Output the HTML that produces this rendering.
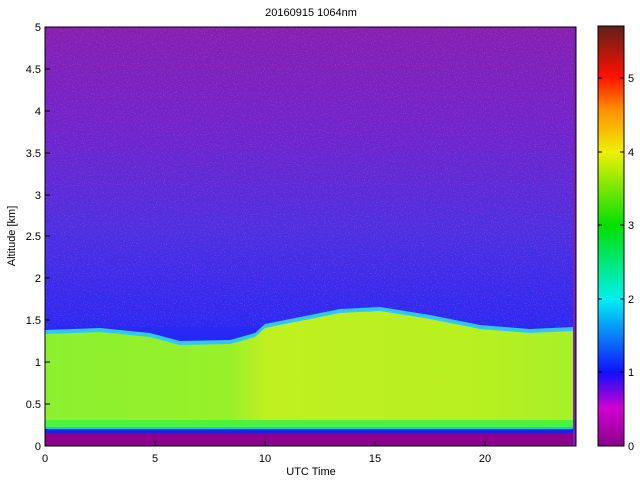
<!DOCTYPE html>
<html><head><style>
html,body{margin:0;padding:0;background:#fff;}
svg{display:block;font-family:"Liberation Sans",sans-serif;font-size:11px;}
</style></head><body>
<svg width="640" height="480" xmlns="http://www.w3.org/2000/svg">
<defs>
<linearGradient id="sky" gradientUnits="userSpaceOnUse" x1="0" y1="27" x2="0" y2="340">
<stop offset="0" stop-color="#8420b0"/>
<stop offset="0.3" stop-color="#7024c8"/>
<stop offset="0.65" stop-color="#4a30e0"/>
<stop offset="1" stop-color="#2428f4"/>
</linearGradient>
<linearGradient id="cb" x1="0" y1="1" x2="0" y2="0">
<stop offset="0" stop-color="#8a008a"/>
<stop offset="0.09" stop-color="#d000d0"/>
<stop offset="0.175" stop-color="#1010ff"/>
<stop offset="0.35" stop-color="#00f0f0"/>
<stop offset="0.525" stop-color="#00e000"/>
<stop offset="0.7" stop-color="#f0f000"/>
<stop offset="0.8" stop-color="#ff9000"/>
<stop offset="0.88" stop-color="#ff1000"/>
<stop offset="1" stop-color="#602018"/>
</linearGradient>
<linearGradient id="bl" x1="0" y1="0" x2="1" y2="0">
<stop offset="0" stop-color="#8cf030"/>
<stop offset="0.35" stop-color="#98f028"/>
<stop offset="0.42" stop-color="#c0f020"/>
<stop offset="0.8" stop-color="#b8f020"/>
<stop offset="1" stop-color="#a8f028"/>
</linearGradient>
<filter id="n" x="0" y="0" width="100%" height="100%">
<feTurbulence type="fractalNoise" baseFrequency="0.9" numOctaves="1" seed="3"/>
<feColorMatrix values="0 0 0 0 0.9  0 0 0 0 0.1  0 0 0 0 0.9  0 0 0 3 -1.6"/>
</filter>
</defs>
<rect x="45" y="27" width="531" height="419" fill="url(#sky)"/>
<rect x="45" y="27" width="531" height="300" filter="url(#n)" opacity="0.5"/>
<polygon fill="#30c8f0" points="45,330 100,328 150,333 180,341 230,340 255,333 265,324 290,319 340,309 380,307 430,315 480,325 530,329 573,327 573,446 45,446"/>
<polygon fill="url(#bl)" points="45,334 100,332 150,337 180,345 230,344 255,337 265,328 290,323 340,313 380,311 430,319 480,329 530,333 573,331 573,446 45,446"/>
<rect x="45" y="420" width="528" height="7" fill="#50f040"/>
<rect x="45" y="427" width="528" height="2" fill="#00d0f0"/>
<rect x="45" y="429" width="528" height="4" fill="#2020e0"/>
<rect x="45" y="433" width="528" height="13" fill="#8c0090"/>
<rect x="573" y="27" width="3" height="419" fill="#8020b0"/>
<rect x="45" y="27" width="531" height="419" fill="none" stroke="#000" stroke-width="1"/>
<g stroke="#000">
<line x1="45" y1="446" x2="50" y2="446"/><line x1="45" y1="404" x2="50" y2="404"/><line x1="45" y1="362" x2="50" y2="362"/><line x1="45" y1="320" x2="50" y2="320"/><line x1="45" y1="278" x2="50" y2="278"/><line x1="45" y1="236" x2="50" y2="236"/><line x1="45" y1="195" x2="50" y2="195"/><line x1="45" y1="153" x2="50" y2="153"/><line x1="45" y1="111" x2="50" y2="111"/><line x1="45" y1="69" x2="50" y2="69"/>
<line x1="155" y1="446" x2="155" y2="441"/><line x1="265" y1="446" x2="265" y2="441"/><line x1="375" y1="446" x2="375" y2="441"/><line x1="485" y1="446" x2="485" y2="441"/>
</g>
<g text-anchor="end">
<text x="41" y="450">0</text><text x="41" y="408">0.5</text><text x="41" y="366">1</text><text x="41" y="324">1.5</text><text x="41" y="282">2</text><text x="41" y="240">2.5</text><text x="41" y="199">3</text><text x="41" y="157">3.5</text><text x="41" y="115">4</text><text x="41" y="73">4.5</text><text x="41" y="31">5</text>
</g>
<g text-anchor="middle">
<text x="45" y="462">0</text><text x="155" y="462">5</text><text x="265" y="462">10</text><text x="375" y="462">15</text><text x="485" y="462">20</text>
<text x="311" y="475">UTC Time</text>
<text x="311" y="16">20160915 1064nm</text>
<text transform="translate(15,236) rotate(-90)">Altitude [km]</text>
</g>
<rect x="598" y="26" width="26" height="420" fill="url(#cb)" stroke="#000"/>
<g stroke="#000">
<line x1="598" y1="446" x2="602" y2="446"/><line x1="598" y1="372" x2="602" y2="372"/><line x1="598" y1="299" x2="602" y2="299"/><line x1="598" y1="225" x2="602" y2="225"/><line x1="598" y1="152" x2="602" y2="152"/><line x1="598" y1="78" x2="602" y2="78"/>
<line x1="620" y1="446" x2="624" y2="446"/><line x1="620" y1="372" x2="624" y2="372"/><line x1="620" y1="299" x2="624" y2="299"/><line x1="620" y1="225" x2="624" y2="225"/><line x1="620" y1="152" x2="624" y2="152"/><line x1="620" y1="78" x2="624" y2="78"/>
</g>
<text x="628" y="450">0</text><text x="628" y="376">1</text><text x="628" y="303">2</text><text x="628" y="229">3</text><text x="628" y="156">4</text><text x="628" y="82">5</text>
</svg>
</body></html>
